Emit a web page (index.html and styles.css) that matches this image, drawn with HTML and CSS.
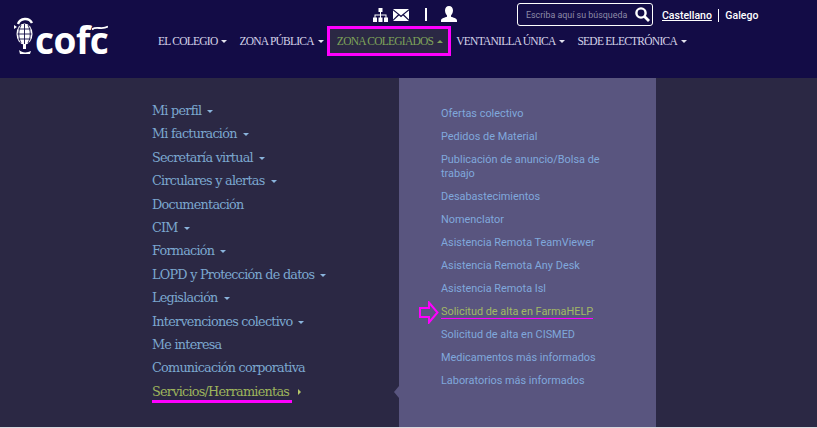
FILE: index.html
```html
<!DOCTYPE html>
<html lang="es">
<head>
<meta charset="utf-8">
<title>COFC</title>
<link rel="stylesheet" href="styles.css">
</head>
<body>
<header class="header">
  <a class="logo" href="#">
    <svg class="logo-mic" width="21" height="40" viewBox="0 0 21 40">
      <path d="M4 7C6 1 15 0 18 6" fill="none" stroke="#fff" stroke-width="2.400"/>
      <ellipse cx="10.500" cy="17" rx="8" ry="10.500" fill="#fff"/>
      <path d="M4.500 12h12M3.500 17h14M4.500 22h12M10.500 7v20M7 8c-3 6-3 12 0 18M14 8c3 6 3 12 0 18" fill="none" stroke="#130c46" stroke-width=".9"/>
      <path d="M9 27h3v5H9zM5 33c3 3 8 3 12 1l-1 3H6z" fill="#fff"/>
      <path d="M0 8l3 2-3 2z" fill="#fff"/>
    </svg>
    <span class="logo-text">cofc</span>
    <svg class="logo-tilde" width="16" height="6" viewBox="0 0 16 6"><path d="M0 4.500C4 .5 10 5.500 16 1.500" fill="none" stroke="#fff" stroke-width="1.800"/></svg>
  </a>
  <div class="head-main">
    <div class="topbar">
      <div class="top-icons">
        <svg width="15" height="14" viewBox="0 0 15 14"><path d="M5.500 0h4v4h-4zM0 9.500h4V14H0zM5.500 9.500h4V14h-4zM11 9.500h4V14h-4zM7 4h1v2.500h5.500v3h-1V7.500H8v2H7v-2H2.500v2h-1v-3H7z" fill="#fff"/></svg>
        <svg width="16" height="12" viewBox="0 0 16 12"><path d="M0 0h16L8 6.500zM0 1.500V10.500L5 5.500zM16 1.500V10.500L11 5.500zM0 12l6-5.500 2 1.800 2-1.800 6 5.500z" fill="#fff"/></svg>
        <span class="sep sep-icons"></span>
        <svg class="icon-user" width="16" height="16" viewBox="0 0 16 16"><path d="M8 0c2.500 0 4 2 4 4.500S10.500 9 10 9.500v1.200c2 .8 6 1.300 6 3.800v1.500H0v-1.500c0-2.500 4-3 6-3.800V9.500C5.500 9 4 7 4 4.500S5.500 0 8 0z" fill="#fff"/></svg>
      </div>
      <form class="search">
        <span class="search-ph">Escriba aquí su búsqueda</span>
        <svg width="15" height="15" viewBox="0 0 15 15"><circle cx="6" cy="6" r="4.600" fill="none" stroke="#fff" stroke-width="2.400"/><path d="M9.500 9.500L14 14" stroke="#fff" stroke-width="2.800"/></svg>
      </form>
      <div class="langs">
        <a class="lang lang-on" href="#">Castellano</a>
        <span class="sep"></span>
        <a class="lang" href="#">Galego</a>
      </div>
    </div>
    <nav class="nav">
      <a class="nav-item" href="#">EL COLEGIO<i class="caret"></i></a>
      <a class="nav-item" href="#">ZONA PÚBLICA<i class="caret"></i></a>
      <a class="nav-item nav-active" href="#">ZONA COLEGIADOS<i class="caret caret-up"></i></a>
      <a class="nav-item" href="#">VENTANILLA ÚNICA<i class="caret"></i></a>
      <a class="nav-item" href="#">SEDE ELECTRÓNICA<i class="caret"></i></a>
    </nav>
  </div>
</header>
<main class="mega">
  <ul class="side">
    <li><a href="#">Mi perfil<i class="caret"></i></a></li>
    <li><a href="#">Mi facturación<i class="caret"></i></a></li>
    <li><a href="#">Secretaría virtual<i class="caret"></i></a></li>
    <li><a href="#">Circulares y alertas<i class="caret"></i></a></li>
    <li><a href="#">Documentación</a></li>
    <li><a href="#">CIM<i class="caret"></i></a></li>
    <li><a href="#">Formación<i class="caret"></i></a></li>
    <li><a href="#">LOPD y Protección de datos<i class="caret"></i></a></li>
    <li><a href="#">Legislación<i class="caret"></i></a></li>
    <li><a href="#">Intervenciones colectivo<i class="caret"></i></a></li>
    <li><a href="#">Me interesa</a></li>
    <li><a href="#">Comunicación corporativa</a></li>
    <li><a class="side-active" href="#"><span class="side-label">Servicios/Herramientas&nbsp;</span><i class="caret caret-right"></i></a></li>
  </ul>
  <section class="panel">
    <i class="panel-notch"></i>
    <ul class="sub">
      <li><a href="#">Ofertas colectivo</a></li>
      <li><a href="#">Pedidos de Material</a></li>
      <li><a href="#">Publicación de anuncio/Bolsa de trabajo</a></li>
      <li><a href="#">Desabastecimientos</a></li>
      <li><a href="#">Nomenclator</a></li>
      <li><a href="#">Asistencia Remota TeamViewer</a></li>
      <li><a href="#">Asistencia Remota Any Desk</a></li>
      <li><a href="#">Asistencia Remota Isl</a></li>
      <li class="sub-marked">
        <svg class="sub-arrow" width="20" height="23" viewBox="0 0 20 23"><path d="M1 7h9V1.500L18.500 11.500 10 21.500V16H1z" fill="none" stroke="#f0f" stroke-width="2"/></svg>
        <a class="sub-active" href="#">Solicitud de alta en FarmaHELP</a>
      </li>
      <li><a href="#">Solicitud de alta en CISMED</a></li>
      <li><a href="#">Medicamentos más informados</a></li>
      <li><a href="#">Laboratorios más informados</a></li>
    </ul>
  </section>
</main>
</body>
</html>
```

FILE: styles.css
```css
* { box-sizing: border-box; }
html, body { margin: 0; padding: 0; }
body { height: 428px; overflow: hidden; background: #d9d9de; font-family: Roboto, sans-serif; }
a { text-decoration: none; color: inherit; }
ul { list-style: none; margin: 0; padding: 0; }
i { display: inline-block; }

.header { height: 78px; background: #130c46; display: flex; }
.logo { position: relative; width: 157px; padding: 17px 0 0 14px; display: flex; align-items: flex-start; }
.logo-mic { flex: none; }
.logo-text { font-family: "Open Sans", sans-serif; font-weight: 700; font-size: 37px; line-height: 44px; color: #fff; letter-spacing: -.5px; margin-top: 1px; }
.logo-tilde { position: absolute; left: 92px; top: 25px; }

.head-main { flex: 1; display: flex; flex-direction: column; }
.topbar { height: 26px; display: flex; align-items: center; padding: 3px 0 0 216px; }
.top-icons { width: 144px; display: flex; align-items: center; gap: 5px; }
.icon-user { margin-top: -1px; }
.sep { display: block; width: 1.500px; height: 13px; background: #fff; }
.sep-icons { margin: 0 9px 0 11px; }
.search { flex: none; width: 136px; height: 23px; margin-right: 9px; border: 1.500px solid #fff; border-radius: 3px; display: flex; align-items: center; justify-content: space-between; padding: 0 2px 0 8px; }
.search-ph { font-size: 8.900px; color: #8e8ba8; white-space: nowrap; }
.langs { display: flex; align-items: center; gap: 6px; padding-top: 1px; font-size: 10.500px; font-weight: 500; color: #fff; }
.lang-on { text-decoration: underline; }

.nav { display: flex; height: 30px; padding-left: 1px; }
.nav-item { display: flex; align-items: center; margin-right: 12px; font-family: "Liberation Serif", serif; font-size: 11.500px; letter-spacing: -.75px; color: #d5d3e8; white-space: nowrap; }
.nav-item .caret { color: #e2e2ee; margin-left: 4px; }
.nav-active { margin: 0 5px 0 -9px; padding: 0 5px 0 7px; border: 3px solid #f0f; background: #2b2844; color: #7ea35a; }
.nav-active .caret { color: #7ea35a; }

.caret { width: 0; height: 0; margin-left: 6px; border-left: 3.500px solid transparent; border-right: 3.500px solid transparent; border-top: 3.500px solid currentColor; vertical-align: middle; }
.caret-up { border-top: 0; border-bottom: 3.500px solid currentColor; }
.caret-right { border: 0; border-top: 3.500px solid transparent; border-bottom: 3.500px solid transparent; border-left: 3.500px solid currentColor; margin-left: 6px; }

.mega { height: 349px; background: #2b2844; display: flex; padding-left: 152px; }
.side { width: 247px; padding-top: 21px; font-family: "DejaVu Serif", serif; font-size: 12.800px; letter-spacing: -.75px; color: #7ba7cf; }
.side li { height: 23.400px; line-height: 23.400px; white-space: nowrap; }
.side .caret { margin-left: 6px; color: #8ab4dc; }
.side-active { color: #9db45c; }
.side-label { display: inline-block; line-height: 17px; border-bottom: 3px solid #f0f; }
.side-active .caret { color: #b5c86a; margin-left: 6px; }

.panel { position: relative; width: 257px; background: #59557f; padding: 29px 40px 0 42px; }
.panel-notch { position: absolute; left: -5px; top: 308px; width: 0; height: 0; border-top: 6px solid transparent; border-bottom: 6px solid transparent; border-right: 5px solid #59557f; }
.sub { font-size: 10.900px; line-height: 13.500px; color: #80a8dc; }
.sub li { position: relative; margin-bottom: 9.500px; }
.sub-active { display: inline-block; color: #a3b865; border-bottom: 1.500px solid #f0f; margin-bottom: -1.500px; }
.sub-arrow { position: absolute; left: -22px; top: -4px; }
```
